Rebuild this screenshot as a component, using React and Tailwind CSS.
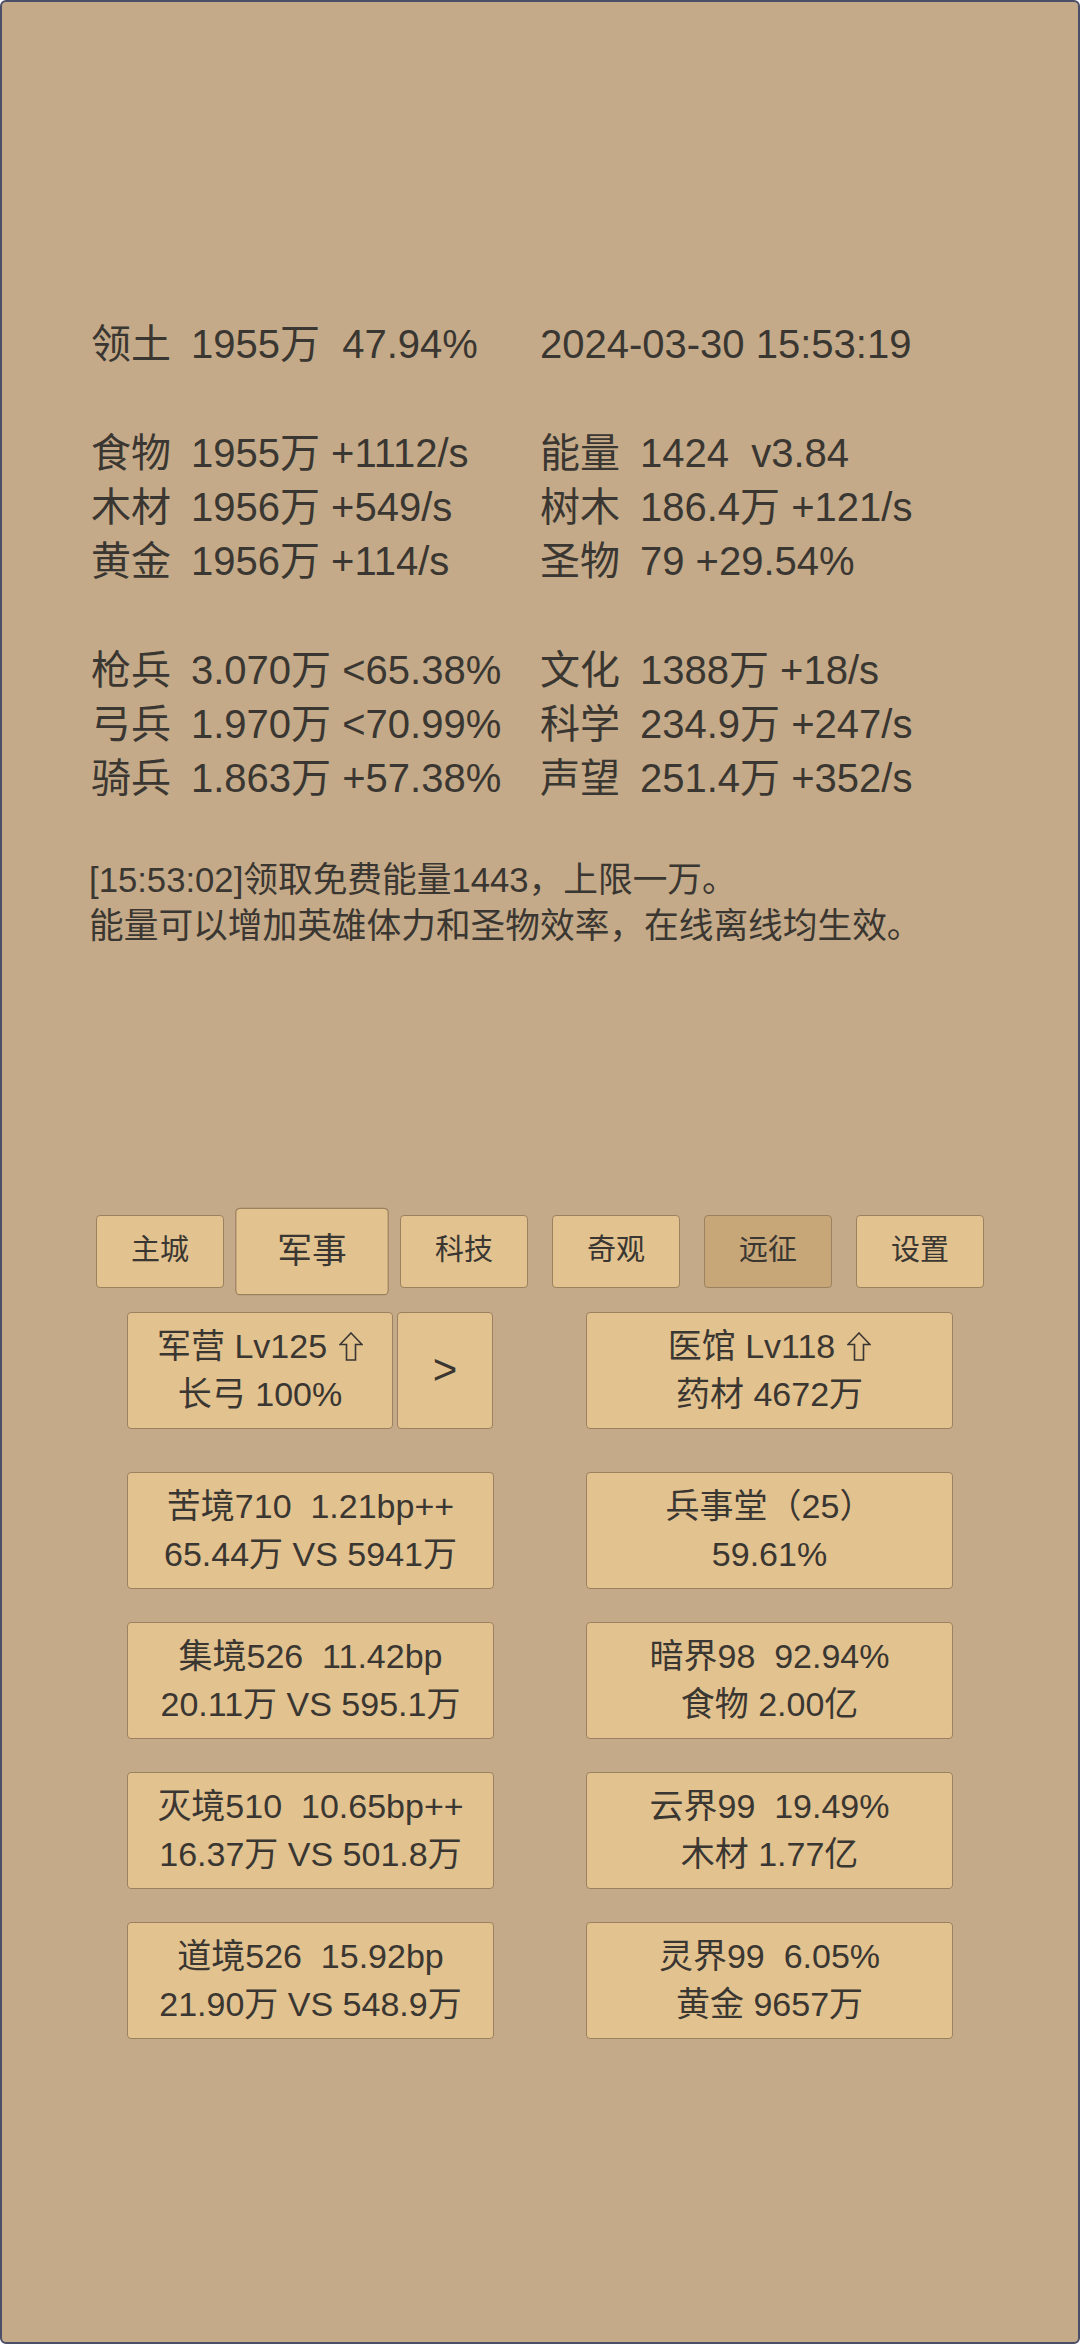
import React from "react";

const FONT = { fontFamily: '"Liberation Sans", "Noto Sans CJK SC", sans-serif' };

const stats = [
  [["领土", "1955万  47.94%"], ["", "2024-03-30 15:53:19"]],
  null,
  [["食物", "1955万 +1112/s"], ["能量", "1424  v3.84"]],
  [["木材", "1956万 +549/s"], ["树木", "186.4万 +121/s"]],
  [["黄金", "1956万 +114/s"], ["圣物", "79 +29.54%"]],
  null,
  [["枪兵", "3.070万 <65.38%"], ["文化", "1388万 +18/s"]],
  [["弓兵", "1.970万 <70.99%"], ["科学", "234.9万 +247/s"]],
  [["骑兵", "1.863万 +57.38%"], ["声望", "251.4万 +352/s"]],
];

const tabs = ["主城", "军事", "科技", "奇观", "远征", "设置"];

const cards = [
  ["苦境710  1.21bp++", "65.44万 VS 5941万"],
  ["兵事堂（25）", "59.61%"],
  ["集境526  11.42bp", "20.11万 VS 595.1万"],
  ["暗界98  92.94%", "食物 2.00亿"],
  ["灭境510  10.65bp++", "16.37万 VS 501.8万"],
  ["云界99  19.49%", "木材 1.77亿"],
  ["道境526  15.92bp", "21.90万 VS 548.9万"],
  ["灵界99  6.05%", "黄金 9657万"],
];

// outlined up arrow like ⇧
function UpArrow() {
  return (
    <svg width="24" height="29" viewBox="0 0 24 29" className="inline-block align-[-3px] ml-[12px]">
      <path
        d="M12 1 L23 12.5 L16.5 12.5 L16.5 28 L7.5 28 L7.5 12.5 L1 12.5 Z"
        fill="none"
        stroke="#3a3631"
        strokeWidth="1.6"
        strokeLinejoin="miter"
      />
    </svg>
  );
}

function Cell({ cell }) {
  if (!cell) return <div />;
  const [label, value] = cell;
  return (
    <div className="flex whitespace-pre">
      {label ? <span className="w-[100px] shrink-0">{label}</span> : null}
      <span>{value}</span>
    </div>
  );
}

function Card({ children, className = "" }) {
  return (
    <div
      className={`h-[117px] flex flex-col items-center justify-center bg-[#e2c28f] border border-[#9c8160] rounded-[4px] text-[34px] leading-[48px] whitespace-pre ${className}`}
    >
      {children}
    </div>
  );
}

export default function App() {
  return (
    <div
      style={FONT}
      className="w-[1080px] h-[2344px] box-border bg-[#c4aa88] border-2 border-[#4a4e66] rounded-[6px] text-[#3a3631] overflow-hidden"
    >
      {/* Stats */}
      <div className="pt-[315px] pl-[89px] text-[40px] leading-[54.3px]">
        {stats.map((row, i) =>
          row ? (
            <div key={i} className="grid grid-cols-[449px_1fr] h-[54.3px]">
              <Cell cell={row[0]} />
              <Cell cell={row[1]} />
            </div>
          ) : (
            <div key={i} className="h-[54.3px]" />
          )
        )}
      </div>

      {/* Message */}
      <div className="mt-[51px] pl-[87px] text-[34.7px] leading-[46px]">
        <div>[15:53:02]领取免费能量1443，上限一万。</div>
        <div>能量可以增加英雄体力和圣物效率，在线离线均生效。</div>
      </div>

      {/* Tabs */}
      <div className="mt-[266px] flex justify-center gap-[24px]">
        {tabs.map((t) => (
          <div
            key={t}
            className={`w-[128px] h-[73px] flex items-center justify-center border border-[#9c8160] rounded-[4px] text-[29px] ${
              t === "远征" ? "bg-[#c7a678]" : "bg-[#e2c28f]"
            } ${t === "军事" ? "scale-[1.2]" : ""}`}
          >
            {t}
          </div>
        ))}
      </div>

      {/* Buildings */}
      <div className="mt-[24px] grid grid-cols-[367px_367px] justify-center gap-x-[92px] gap-y-[33px]">
        <div className="flex gap-[4px] mb-[10px]">
          <Card className="w-[266px]">
            <div>
              军营 Lv125
              <UpArrow />
            </div>
            <div>长弓 100%</div>
          </Card>
          <Card className="w-[96px] text-[42px]">
            <div>&gt;</div>
          </Card>
        </div>
        <div className="mb-[10px]">
          <Card>
            <div>
              医馆 Lv118
              <UpArrow />
            </div>
            <div>药材 4672万</div>
          </Card>
        </div>
        {cards.map(([a, b], i) => (
          <Card key={i}>
            <div>{a}</div>
            <div>{b}</div>
          </Card>
        ))}
      </div>
    </div>
  );
}
